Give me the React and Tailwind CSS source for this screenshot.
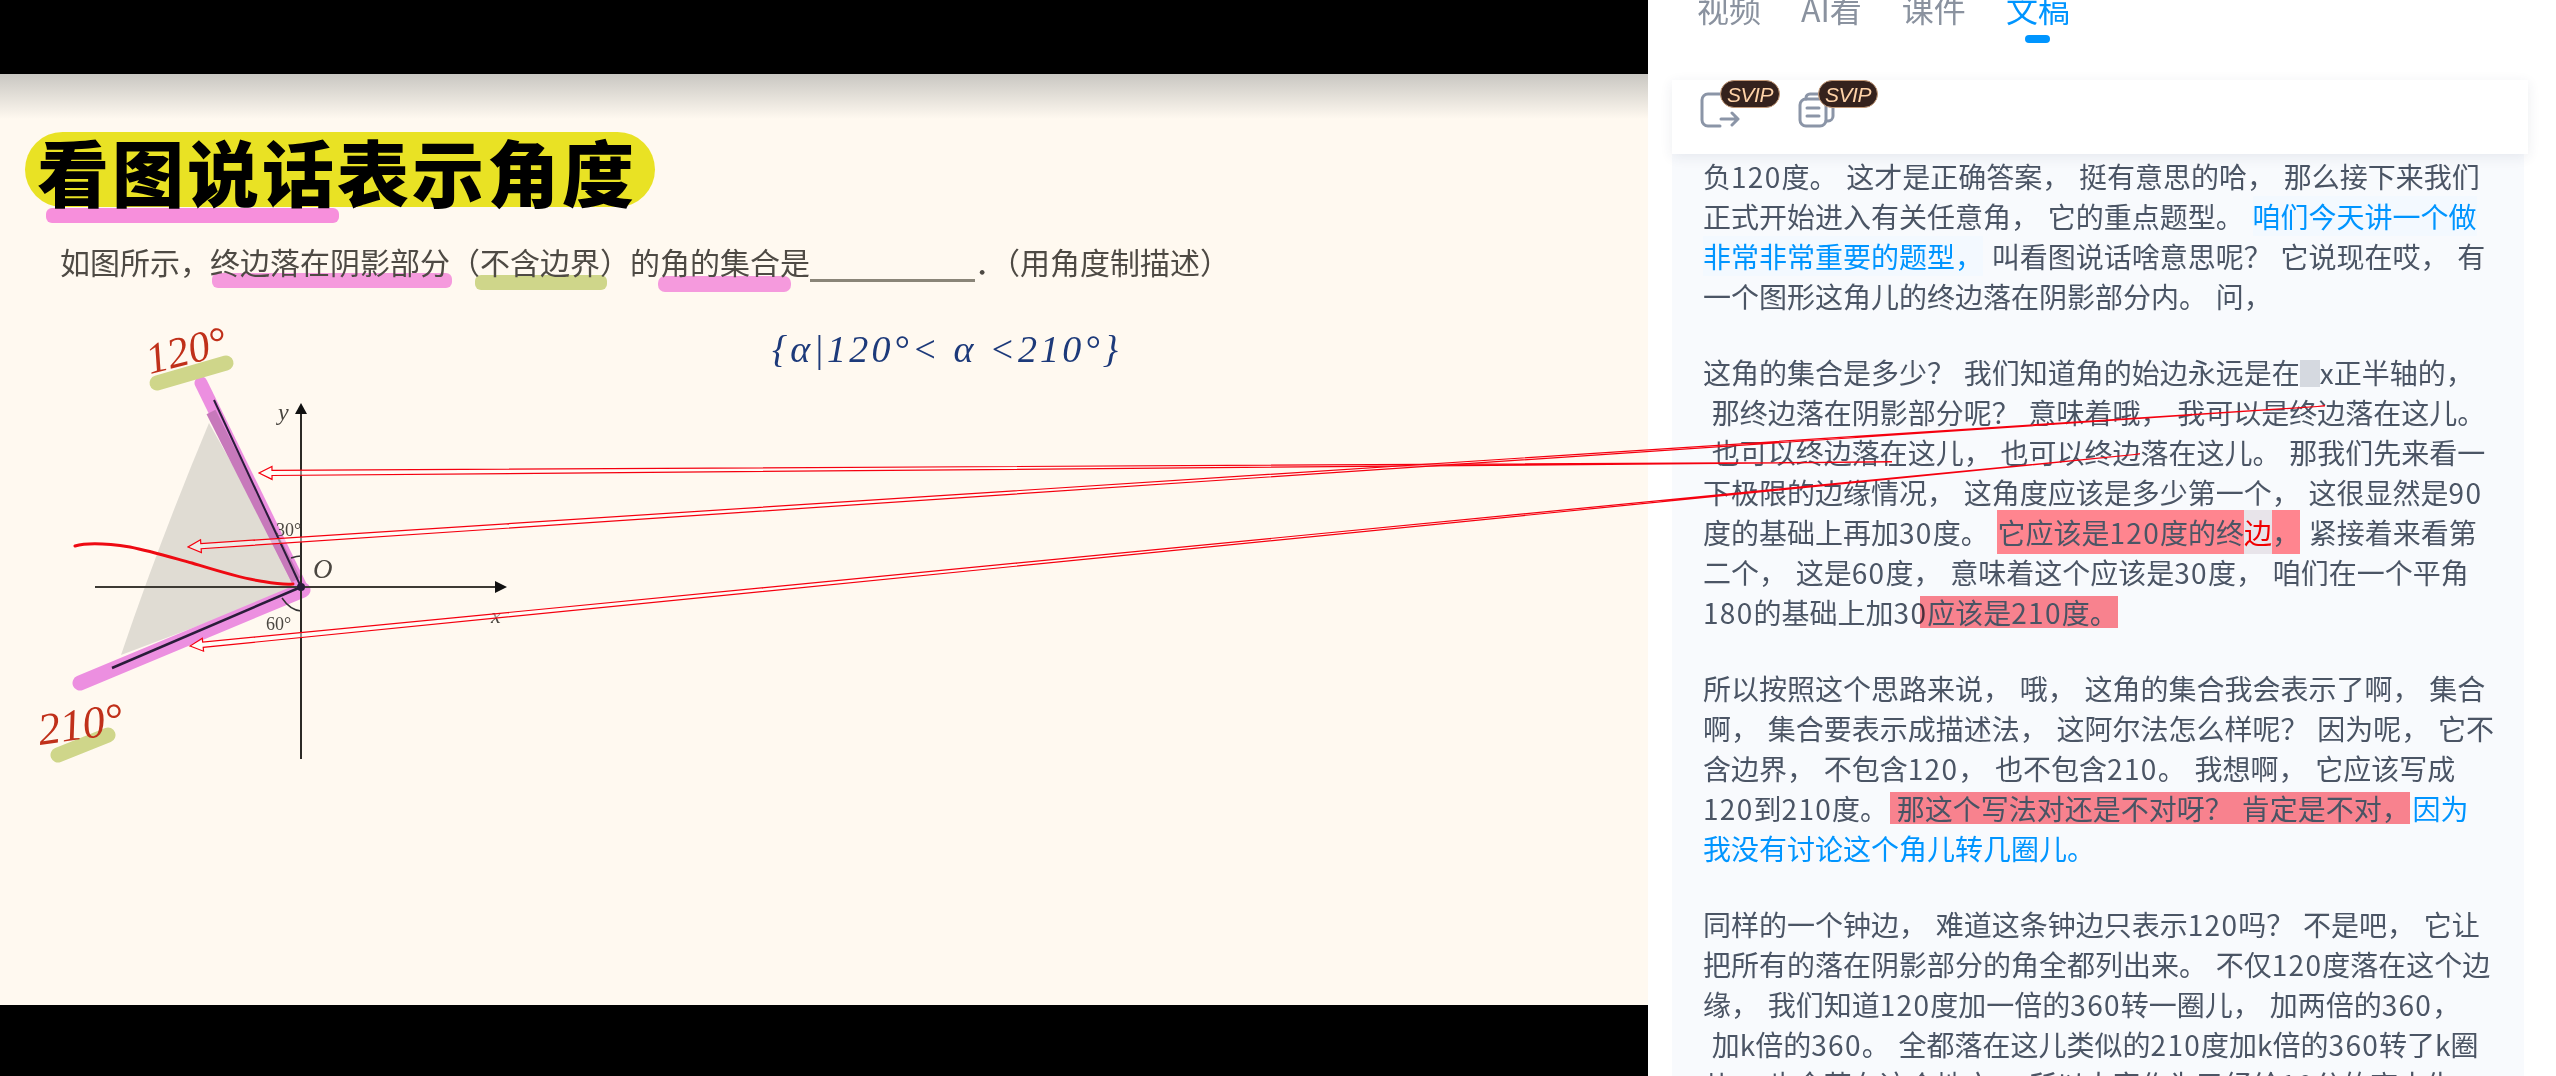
const sans = { fontFamily: '"Noto Sans CJK SC", sans-serif' }

// long hollow arrows drawn across the page
function hollowArrow(tx, ty, ex, ey) {
  const len = Math.hypot(ex - tx, ey - ty)
  const ux = (ex - tx) / len
  const uy = (ey - ty) / len
  const nx = -uy
  const ny = ux
  const p = (along, side) => `${tx + ux * along + nx * side},${ty + uy * along + ny * side}`
  return [p(0, 0), p(13, 6.5), p(13, 2.6), `${ex},${ey}`, p(13, -2.6), p(13, -6.5)].join(" ")
}

const arrows = [
  [259, 473, 1892, 462],
  [188, 547, 2325, 406],
  [190, 646, 2140, 454],
]

function Line({ children }) {
  return <div className="whitespace-pre h-[40px]">{children}</div>
}

// digits run a little wider in the reference
function D({ children }) {
  return <span className="tracking-[1.3px]">{children}</span>
}

function Red({ children }) {
  return <span className="inline-block leading-[32px] bg-[#ff858f] mix-blend-multiply -ml-[7px] pl-[7px] -mr-[6px]">{children}</span>
}

function Blue({ children }) {
  return <span className="text-[#0095ff] bg-[#f3f9ff]">{children}</span>
}

function Badge() {
  return (
    <span className="absolute left-[20px] -top-[12px] w-[60px] h-[28px] rounded-[14px] bg-[#35221d] border border-[#c49a78] flex items-center justify-center text-[#ffd3a8] text-[21px] italic leading-none tracking-[-0.5px]" style={{ fontFamily: '"Liberation Sans", sans-serif' }}>
      SVIP
    </span>
  )
}

function Tab({ label, active }) {
  return (
    <div className="flex flex-col items-center">
      <div className={`text-[32px] leading-[40px] ${active ? "text-[#0095ff]" : "text-[#8a929f]"}`}>{label}</div>
      <div className={`mt-[7px] w-[25px] h-[8px] rounded-full ${active ? "bg-[#0095ff]" : ""}`}></div>
    </div>
  )
}

function Diagram() {
  return (
    <svg className="absolute inset-0" width="1648" height="931" viewBox="0 74 1648 931">
      {/* highlights */}
      <rect x="46" y="208" width="293" height="15" rx="6" fill="#f78fdc" />
      <rect x="212" y="273" width="240" height="15" rx="6" fill="#f59add" />
      <rect x="475" y="275" width="132" height="15" rx="6" fill="#cfd68a" />
      <rect x="658" y="276" width="133" height="16" rx="7" fill="#f59add" />

      {/* shaded sector */}
      <path d="M301 587 L209 423 Q160 540 121 655 Z" fill="#e0dcd3" />

      {/* pink edges */}
      <line x1="201" y1="383" x2="301" y2="587" stroke="#ec8fe0" strokeWidth="13" strokeLinecap="round" />
      <line x1="211" y1="412" x2="296" y2="580" stroke="#c779bb" strokeWidth="10" />
      <line x1="80" y1="683" x2="303" y2="590" stroke="#ec8fe0" strokeWidth="15" strokeLinecap="round" />
      <line x1="214" y1="400" x2="301" y2="587" stroke="#2a1c3a" strokeWidth="2" />
      <line x1="112" y1="668" x2="301" y2="587" stroke="#2a1c3a" strokeWidth="2.5" />

      {/* axes */}
      <line x1="95" y1="587" x2="497" y2="587" stroke="#3d3a34" strokeWidth="2" />
      <line x1="301" y1="412" x2="301" y2="759" stroke="#2c2a26" strokeWidth="2" />
      <polygon points="301,403 295,414 307,414" fill="#111" />
      <polygon points="507,587 495,581 495,593" fill="#111" />
      <circle cx="301" cy="587" r="4" fill="#2a1c3a" />
      <path d="M291 558 Q297 556 301 556" fill="none" stroke="#333" strokeWidth="1.5" />
      <path d="M282 598 Q290 610 301 611" fill="none" stroke="#333" strokeWidth="1.5" />

      {/* labels */}
      <g fontFamily="Liberation Serif, serif" fill="#4a4640">
        <text x="278" y="420" fontSize="24" fontStyle="italic">y</text>
        <text x="313" y="578" fontSize="27" fontStyle="italic">O</text>
        <text x="276" y="536" fontSize="18">30°</text>
        <text x="266" y="630" fontSize="18">60°</text>
        <text x="491" y="623" fontSize="22" fontStyle="italic">x</text>
      </g>

      {/* handwriting */}
      <line x1="157" y1="383" x2="226" y2="363" stroke="#cfd68a" strokeWidth="15" strokeLinecap="round" />
      <line x1="58" y1="755" x2="108" y2="735" stroke="#cfd68a" strokeWidth="15" strokeLinecap="round" />
      <text x="150" y="374" fontSize="43" fontStyle="italic" fill="#c0301a" fontFamily="Liberation Serif, serif" transform="rotate(-14 150 374)">120°</text>
      <text x="40" y="745" fontSize="45" fontStyle="italic" fill="#c0301a" fontFamily="Liberation Serif, serif" transform="rotate(-8 40 745)">210°</text>
      <text x="772" y="362" fontSize="38" textLength="346" fontStyle="italic" fill="#1d3a7a" fontFamily="Liberation Serif, serif">{"{α|120°< α <210°}"}</text>
    </svg>
  )
}

function App() {
  return (
    <div lang="zh-CN" className="relative w-[2556px] h-[1076px] overflow-hidden flex bg-white" style={sans}>

      {/* VIDEO */}
      <div className="w-[1648px] flex flex-col bg-black">
        <div className="h-[74px]"></div>
        <div className="relative h-[931px] bg-[#fff9f0] overflow-hidden">
          <Diagram />
          <div className="relative">
            <div className="h-[45px] bg-gradient-to-b from-[#c9c7c2] to-[#fff9f0]"></div>
            <div className="ml-[25px] mt-[13px] w-[630px] h-[75px] rounded-full bg-[#e9e224] flex items-center pl-[12px] text-[72px] font-black text-black tracking-[3px] whitespace-nowrap">
              看图说话表示角度
            </div>
            <div className="ml-[60px] mt-[39px] h-[36px] flex items-center whitespace-pre text-[30px] leading-[36px] text-[#4e4a44]" style={{ fontFamily: '"Liberation Serif", "Noto Sans CJK SC", serif' }}>
              如图所示，终边落在阴影部分（不含边界）的角的集合是
              <span className="inline-block w-[165px] h-[36px] border-b-[3px] border-[#8a8578]"></span>
              ．（用角度制描述）
            </div>
          </div>
        </div>
        <div className="flex-1"></div>
      </div>

      {/* SIDE PANEL */}
      <div className="flex-1 flex flex-col min-w-0 bg-white">

        <div className="-mt-[12px] pl-[49px] flex gap-[40px] mb-[37px]">
          <Tab label="视频" />
          <Tab label="AI看" />
          <Tab label="课件" />
          <Tab label="文稿" active />
        </div>

        <div className="relative z-10 ml-[24px] mr-[28px] h-[74px] bg-white shadow-[0_3px_12px_rgba(40,50,90,0.09)] flex items-start pt-[12px] pl-[28px] gap-[58px]">
          <div className="relative w-[40px] h-[36px]">
            <svg width="40" height="36" viewBox="0 0 40 36" fill="none" stroke="#8b95a7" strokeWidth="3" strokeLinecap="round" strokeLinejoin="round">
              <path d="M20 2 H8 a6 6 0 0 0 -6 6 V28 a6 6 0 0 0 6 6 H20" />
              <path d="M21 27 H38 M32 21 L38 27 L32 33" />
            </svg>
            <Badge />
          </div>
          <div className="relative w-[40px] h-[36px]">
            <svg width="40" height="36" viewBox="0 0 40 36" fill="none" stroke="#8b95a7" strokeWidth="3" strokeLinecap="round" strokeLinejoin="round">
              <path d="M8 7 V6 a4 4 0 0 1 4 -4 H30 a5 5 0 0 1 5 5 V24 a5 5 0 0 1 -5 5 H28" />
              <rect x="2" y="7" width="26" height="27" rx="6" />
              <path d="M9 16 H21 M9 24 H21" />
            </svg>
            <Badge />
          </div>
        </div>

        <div className="flex-1 ml-[24px] mr-[32px] bg-[#f8fafd] pt-[2px] pl-[31px] text-[28px] leading-[40px] text-[#4b5565] [word-spacing:2.5px] flex flex-col gap-[36px] overflow-hidden">
          <div>
            <Line>负<D>120</D>度。 这才是正确答案， 挺有意思的哈， 那么接下来我们</Line>
            <Line>正式开始进入有关任意角， 它的重点题型。 <Blue>咱们今天讲一个做</Blue></Line>
            <Line><Blue>非常非常重要的题型，</Blue> 叫看图说话啥意思呢？ 它说现在哎， 有</Line>
            <Line>一个图形这角儿的终边落在阴影部分内。 问，</Line>
          </div>
          <div>
            <Line>这角的集合是多少？ 我们知道角的始边永远是在<span className="inline-block w-[20px] h-[27px] align-[-3px] bg-[#d5d9e0]"></span>x正半轴的，</Line>
            <Line> 那终边落在阴影部分呢？ 意味着哦， 我可以是终边落在这儿。</Line>
            <Line> 也可以终边落在这儿， 也可以终边落在这儿。 那我们先来看一</Line>
            <Line>下极限的边缘情况， 这角度应该是多少第一个， 这很显然是<D>90</D></Line>
            <Line>度的基础上再加<D>30</D>度。 <span className="bg-[#ff858f] py-[2px]">它应该是<D>120</D>度的终<span className="text-[#f00000] bg-[#e8e4ea] py-[2px]">边</span>，</span> 紧接着来看第</Line>
            <Line>二个， 这是<D>60</D>度， 意味着这个应该是<D>30</D>度， 咱们在一个平角</Line>
            <Line><D>180</D>的基础上加<D>30</D><Red>应该是<D>210</D>度。</Red></Line>
          </div>
          <div>
            <Line>所以按照这个思路来说， 哦， 这角的集合我会表示了啊， 集合</Line>
            <Line>啊， 集合要表示成描述法， 这阿尔法怎么样呢？ 因为呢， 它不</Line>
            <Line>含边界， 不包含<D>120</D>， 也不包含<D>210</D>。 我想啊， 它应该写成</Line>
            <Line><D>120</D>到<D>210</D>度。 <Red>那这个写法对还是不对呀？ 肯定是不对，</Red> <span className="text-[#0095ff]">因为</span></Line>
            <Line><span className="text-[#0095ff]">我没有讨论这个角儿转几圈儿。</span></Line>
          </div>
          <div>
            <Line>同样的一个钟边， 难道这条钟边只表示<D>120</D>吗？ 不是吧， 它让</Line>
            <Line>把所有的落在阴影部分的角全都列出来。 不仅<D>120</D>度落在这个边</Line>
            <Line>缘， 我们知道<D>120</D>度加一倍的<D>360</D>转一圈儿， 加两倍的<D>360</D>，</Line>
            <Line> 加k倍的<D>360</D>。 全都落在这儿类似的<D>210</D>度加k倍的<D>360</D>转了k圈</Line>
            <Line>儿， 也全落在这个地方。 所以大家作为已经给<D>10</D>分的高中生</Line>
          </div>
        </div>
      </div>

      {/* RED ANNOTATIONS OVER EVERYTHING */}
      <svg className="absolute inset-0 z-20 pointer-events-none" width="2556" height="1076" viewBox="0 0 2556 1076">
        <path d="M75 546 C85 543 105 543 130 547 C150 551 170 557 192 563 C215 570 240 578 260 581 C272 583 282 585 293 584" fill="none" stroke="#ee0a12" strokeWidth="3" strokeLinecap="round" />
        {arrows.map((a, i) => (
          <polygon key={i} points={hollowArrow(a[0], a[1], a[2], a[3])} fill="rgba(255,255,255,0.45)" stroke="#f5000f" strokeWidth="1.2" strokeLinejoin="miter" />
        ))}
      </svg>

    </div>
  )
}

export default App
